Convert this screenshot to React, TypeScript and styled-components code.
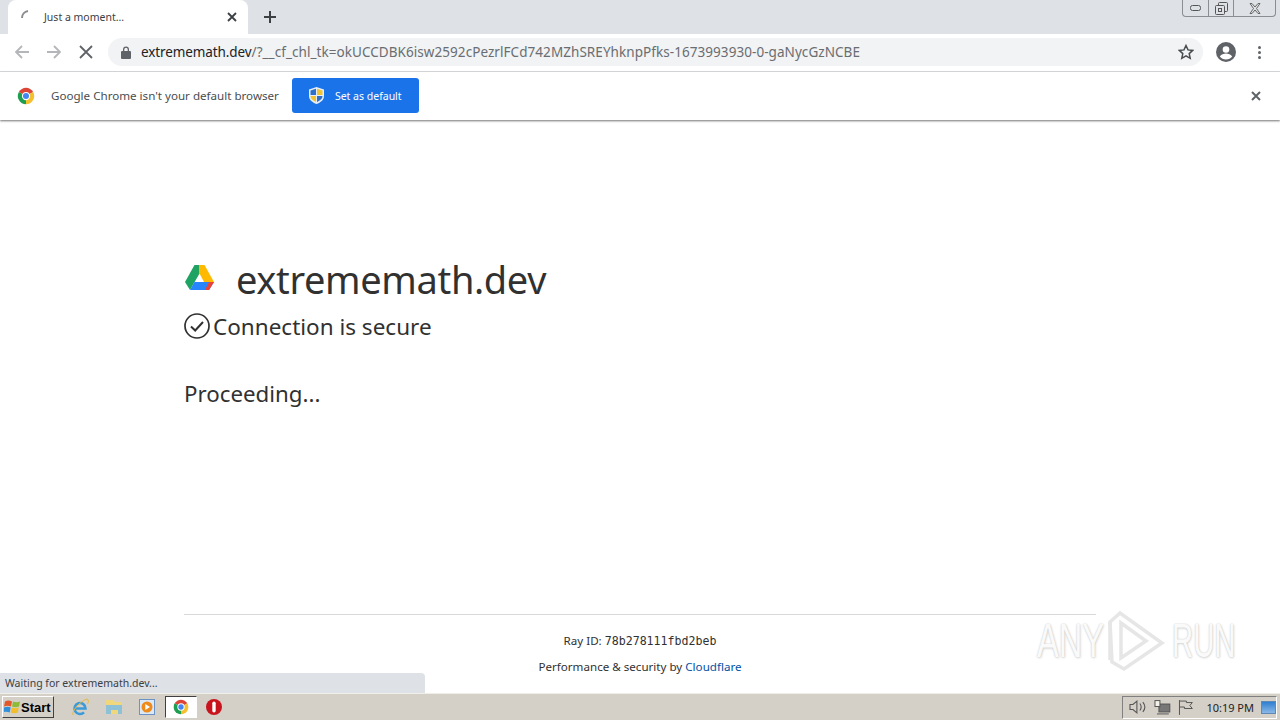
import { FunctionComponent } from 'react';
import styled, { createGlobalStyle } from 'styled-components';

const UI_FONT = '"Noto Sans", "Open Sans", "Liberation Sans", sans-serif';

const GlobalStyle = createGlobalStyle`
	html, body {
		margin: 0;
		padding: 0;
		background: #fff;
		overflow: hidden;
	}
	* {
		box-sizing: border-box;
	}
`;

/** Chrome's round logo, used in the infobar and the taskbar */
const ChromeLogo: FunctionComponent<{ size: number }> = ({ size }) => (
	<svg width={size} height={size} viewBox="0 0 48 48">
		<path d="M24 24 5 13A22 22 0 0 1 43 13z" fill="#db4437" />
		<path d="M24 24 43 13A22 22 0 0 1 24 46z" fill="#f5c02e" />
		<path d="M24 24V46A22 22 0 0 1 5 13z" fill="#1e9e50" />
		<circle cx="24" cy="24" r="11" fill="#fff" />
		<circle cx="24" cy="24" r="8" fill="#4285f4" />
	</svg>
);

const DriveLogo = () => (
	<svg width="31" height="28" viewBox="0 0 31 28">
		<path d="M10.500 1H15.500V9.500L6 26 1 18z" fill="#1ea362" />
		<path d="M15.500 1H20.500L30 18H20L15.500 9.500z" fill="#ffba00" />
		<path d="M10.500 18H30L25 26H6z" fill="#2684fc" />
		<path d="M30 18 25 26H21L25 18z" fill="#ea4335" />
	</svg>
);

const App = () => (
	<Page>
		<GlobalStyle />
		<TabStrip>
			<Tab>
				<Spinner viewBox="0 0 16 16">
					<path d="M2 9a7 7 0 0 1 6-7" />
				</Spinner>
				<TabTitle>Just a moment...</TabTitle>
				<svg width="10" height="10" viewBox="0 0 10 10" stroke="#3c4043" strokeWidth="1.8">
					<path d="M1 1l8 8M9 1l-8 8" />
				</svg>
			</Tab>
			<NewTab viewBox="0 0 12 12">
				<path d="M6 0v12M0 6h12" />
			</NewTab>
			<WindowControls>
				<WindowButton $width={25}>
					<svg width="11" height="6" viewBox="0 0 11 6" fill="none" stroke="#555" strokeWidth="1">
						<rect x="0.5" y="0.5" width="10" height="5" rx="2" />
					</svg>
				</WindowButton>
				<WindowButton $width={25}>
					<svg width="13" height="13" viewBox="0 0 13 13" fill="none" stroke="#555" strokeWidth="1">
						<rect x="3.5" y="0.5" width="9" height="9" rx="1" />
						<rect x="0.5" y="3.5" width="9" height="9" rx="1" fill="#dee1e6" />
						<rect x="3.5" y="6.5" width="3" height="3" />
					</svg>
				</WindowButton>
				<WindowButton $width={42}>
					<svg width="12" height="11" viewBox="0 0 12 11" fill="none" stroke="#666" strokeWidth="1">
						<path d="M1 .5h2L6 4l3-3.5h2L7.5 5.5 11 10.500H9L6 7l-3 3.500H1L4.500 5.500z" />
					</svg>
				</WindowButton>
			</WindowControls>
		</TabStrip>

		<Toolbar>
			<NavIcon viewBox="0 0 16 16" $color="#b4b6b9">
				<path d="M15 8H2M8 2 2 8l6 6" />
			</NavIcon>
			<NavIcon viewBox="0 0 16 16" $color="#b4b6b9">
				<path d="M1 8h13M8 2l6 6-6 6" />
			</NavIcon>
			<NavIcon viewBox="0 0 16 16" $color="#5f6368">
				<path d="M2 2l12 12M14 2 2 14" />
			</NavIcon>
			<Omnibox>
				<svg width="10" height="13" viewBox="0 0 10 13">
					<path d="M2 5V3.500a3 3 0 0 1 6 0V5h1a1 1 0 0 1 1 1v6a1 1 0 0 1-1 1H1a1 1 0 0 1-1-1V6a1 1 0 0 1 1-1zm1.300 0h3.400V3.500a1.700 1.700 0 0 0-3.400 0z" fill="#5f6368" />
				</svg>
				<Url>
					<UrlHost>extrememath.dev</UrlHost>/?__cf_chl_tk=okUCCDBK6isw2592cPezrlFCd742MZhSREYhknpPfks-1673993930-0-gaNycGzNCBE
				</Url>
				<StarIcon viewBox="0 0 16 16">
					<path d="M8 1.500l2 4.400 4.700.5-3.500 3.200 1 4.700L8 11.900l-4.200 2.400 1-4.700L1.300 6.400 6 5.900z" />
				</StarIcon>
			</Omnibox>
			<svg width="20" height="20" viewBox="0 0 20 20">
				<circle cx="10" cy="10" r="10" fill="#5f6368" />
				<circle cx="10" cy="7.500" r="3.300" fill="#fff" />
				<path d="M3.800 14.500c1.500-2.300 4-3 6.200-3s4.700.7 6.200 3a7.800 7.800 0 0 1-12.400 0z" fill="#fff" />
			</svg>
			<MenuDots>
				<i />
				<i />
				<i />
			</MenuDots>
		</Toolbar>

		<InfoBar>
			<ChromeLogo size={18} />
			<InfoText>Google Chrome isn't your default browser</InfoText>
			<DefaultButton>
				<svg width="15" height="17" viewBox="0 0 15 17">
					<path d="M7.500 0 15 2.500V9c0 4-3.500 6.500-7.500 8C3.500 15.500 0 13 0 9V2.500z" fill="#e8eef7" />
					<path d="M7 1.700V8H1.500V3.500z" fill="#2f6fc9" />
					<path d="M8 1.700l5.500 1.800V8H8z" fill="#f2c230" />
					<path d="M8 9h5.500c0 2.800-2.700 4.600-5.500 5.900z" fill="#2f6fc9" />
					<path d="M7 9v5.900C4.200 13.600 1.500 11.800 1.500 9z" fill="#f2c230" />
				</svg>
				Set as default
			</DefaultButton>
			<InfoClose viewBox="0 0 10 10">
				<path d="M1 1l8 8M9 1l-8 8" />
			</InfoClose>
		</InfoBar>

		<Content>
			<Main>
				<SiteTitle>
					<DriveLogo />
					<SiteName>extrememath.dev</SiteName>
				</SiteTitle>
				<SecureRow>
					<svg width="26" height="26" viewBox="0 0 26 26" fill="none" stroke="#313131" strokeWidth="1.700">
						<circle cx="13" cy="13" r="12" />
						<path d="M7 13.500l4.200 4L19 9" strokeWidth="2" />
					</svg>
					Connection is secure
				</SecureRow>
				<Proceeding>Proceeding...</Proceeding>
			</Main>
			<Footer>
				<RayLine>
					Ray ID: <code>78b278111fbd2beb</code>
				</RayLine>
				<PerfLine>
					Performance &amp; security by <a href="#cloudflare">Cloudflare</a>
				</PerfLine>
			</Footer>
			<StatusBubble>Waiting for extrememath.dev...</StatusBubble>
			<Watermark>
				<WatermarkWord $scale={0.68}>ANY</WatermarkWord>
				<svg width="58" height="62" viewBox="0 0 58 62" fill="none" stroke="#e6e6e6" strokeWidth="3.500">
					<path d="M3 12 13 3 55 33 17 59 5 52z" />
					<path d="M14 13v35l25-17z" />
					<path d="M3 12v38" />
				</svg>
				<WatermarkWord $scale={0.61}>RUN</WatermarkWord>
			</Watermark>
		</Content>

		<Taskbar>
			<StartButton>
				<svg width="17" height="16" viewBox="0 0 17 16">
					<path d="M1 2.500c2.500-1.500 4.500-1 7 0L7 7.500c-2.500-1-4.500-1-7 0z" fill="#e2582b" />
					<path d="M9 2.500c2.500 1 4.500 1 7 0l-1 5c-2.500 1-4.500 1-7 0z" fill="#8dbb38" />
					<path d="M0 8.500c2.500-1 4.500-1 6.700 0l-1 5c-2.500-1-4.500-1-7 0z" fill="#2f8fd8" />
					<path d="M7.800 8.500c2.500 1 4.500 1 7 0l-1 5c-2.500 1-4.500 1-7 0z" fill="#f3bd2c" />
				</svg>
				Start
			</StartButton>
			<QuickLaunch>
				<TaskSlot>
					<svg width="18" height="18" viewBox="0 0 18 18" fill="none">
						<path d="M4 10.500h10.500a5.500 5.500 0 1 0-1.500 3.800" stroke="#3d9ad8" strokeWidth="2.600" />
						<path d="M2 17C0 14 9 3 16 1c2 .5 1.500 3.500.5 5" stroke="#e8b93a" strokeWidth="1" />
					</svg>
				</TaskSlot>
				<TaskSlot>
					<svg width="18" height="16" viewBox="0 0 18 16">
						<path d="M1 1h7l2 2h7v12H1z" fill="#f1d77b" />
						<path d="M1 6h16v9h-4v-4H6v4H1z" fill="#8fc1d6" />
					</svg>
				</TaskSlot>
				<TaskSlot>
					<svg width="16" height="16" viewBox="0 0 16 16">
						<rect x="0.500" y="0.500" width="15" height="15" fill="#dbe8f5" stroke="#6c93c4" />
						<circle cx="8" cy="8" r="5.500" fill="#ef8a1d" />
						<path d="M6.300 5v6L11 8z" fill="#fff" />
					</svg>
				</TaskSlot>
				<ActiveTask>
					<ChromeLogo size={16} />
				</ActiveTask>
				<TaskSlot>
					<svg width="16" height="16" viewBox="0 0 16 16">
						<circle cx="8" cy="8" r="8" fill="#c8141c" />
						<rect x="6.300" y="2.500" width="3.400" height="11" rx="1.700" fill="#fff" />
					</svg>
				</TaskSlot>
			</QuickLaunch>
			<Tray>
				<svg width="18" height="16" viewBox="0 0 18 16" fill="none" stroke="#555" strokeWidth="1.100">
					<path d="M1 5.500h3L8 2v12L4 10.500H1zM11 4.500c1.500 2 1.500 5 0 7M14 3c2.500 3 2.500 7 0 10" />
				</svg>
				<svg width="17" height="15" viewBox="0 0 17 15">
					<rect x="5" y="4" width="11" height="8" fill="#777" stroke="#555" />
					<rect x="1" y="0.500" width="5" height="6" fill="#f4f1e8" stroke="#555" />
					<path d="M3 14h12" stroke="#555" />
				</svg>
				<svg width="16" height="15" viewBox="0 0 16 15" fill="none" stroke="#555">
					<path d="M1.500 0v15M1.500 1h7v1.500h6l-2.500 3 2.500 3h-8V7H1.500" />
				</svg>
				<Clock>10:19 PM</Clock>
				<ShowDesktop />
			</Tray>
		</Taskbar>
	</Page>
);

const Page = styled.div`
	display: flex;
	flex-direction: column;
	width: 1280px;
	height: 720px;
	overflow: hidden;
	font-family: ${UI_FONT};
	color: #313131;
`;

const TabStrip = styled.div`
	display: flex;
	align-items: flex-end;
	flex: none;
	height: 34px;
	padding-left: 8px;
	background: #dee1e6;
`;

const Tab = styled.div`
	display: flex;
	align-items: center;
	width: 240px;
	height: 34px;
	padding: 0 11px 0 12px;
	background: #fff;
	border-radius: 8px 8px 0 0;
`;

const Spinner = styled.svg`
	flex: none;
	width: 16px;
	height: 16px;
	fill: none;
	stroke: #8b8d90;
	stroke-width: 2;
`;

const TabTitle = styled.span`
	flex: 1;
	margin-left: 8px;
	font-size: 10.500px;
	color: #3c4043;
`;

const NewTab = styled.svg`
	flex: none;
	align-self: center;
	width: 12px;
	height: 12px;
	margin-left: 16px;
	stroke: #3c4043;
	stroke-width: 2;
`;

const WindowControls = styled.div`
	display: flex;
	align-self: flex-start;
	margin: 0 4px 0 auto;
	height: 17px;
	border: 1px solid #8a8d92;
	border-top: none;
	border-radius: 0 0 4px 4px;
`;

const WindowButton = styled.div<{ $width: number }>`
	display: flex;
	align-items: center;
	justify-content: center;
	width: ${({ $width }) => $width}px;
	& + & {
		border-left: 1px solid #8a8d92;
	}
`;

const Toolbar = styled.div`
	display: flex;
	align-items: center;
	flex: none;
	height: 38px;
	padding: 0 19px 1px 14px;
	background: #fff;
	border-bottom: 1px solid #dadce0;
`;

const NavIcon = styled.svg<{ $color: string }>`
	flex: none;
	width: 16px;
	height: 16px;
	margin-right: 16px;
	fill: none;
	stroke: ${({ $color }) => $color};
	stroke-width: 1.800;
`;

const Omnibox = styled.div`
	display: flex;
	align-items: center;
	flex: 1;
	height: 28px;
	margin: 0 13px 0 -2px;
	padding: 0 9px 0 13px;
	background: #f1f3f4;
	border-radius: 14px;
`;

const Url = styled.span`
	flex: 1;
	margin-left: 10px;
	font-size: 13.500px;
	white-space: nowrap;
	color: #6a6d71;
	letter-spacing: 0.06px;
`;

const UrlHost = styled.span`
	color: #202124;
	letter-spacing: -0.1px;
`;

const StarIcon = styled.svg`
	width: 16px;
	height: 16px;
	fill: none;
	stroke: #4a4d50;
	stroke-width: 1.500;
`;

const MenuDots = styled.div`
	display: flex;
	flex-direction: column;
	gap: 2px;
	margin-left: 22px;
	i {
		width: 3px;
		height: 3px;
		background: #5f6368;
		border-radius: 50%;
	}
`;

const InfoBar = styled.div`
	position: relative;
	z-index: 1;
	display: flex;
	align-items: center;
	flex: none;
	height: 48px;
	padding: 0 17px 1px 17px;
	background: #fff;
	box-shadow: 0 1px 2px rgba(0, 0, 0, 0.55);
`;

const InfoText = styled.span`
	margin-left: 16px;
	font-size: 11.600px;
	color: #4a4d50;
`;

const DefaultButton = styled.div`
	display: flex;
	align-items: center;
	gap: 11px;
	width: 127px;
	height: 35px;
	margin-left: 13px;
	padding-left: 17px;
	background: #1a73e8;
	border-radius: 3px;
	color: #fff;
	font-size: 10.500px;
`;

const InfoClose = styled.svg`
	width: 10px;
	height: 10px;
	margin-left: auto;
	margin-right: 2px;
	stroke: #5f6368;
	stroke-width: 2;
`;

const Content = styled.div`
	position: relative;
	display: flex;
	flex-direction: column;
	flex: 1;
	min-height: 0;
	padding: 0 184px;
	background: #fff;
`;

const Main = styled.div`
	flex: 1;
	padding-top: 134px;
`;

const SiteTitle = styled.div`
	display: flex;
	align-items: center;
	height: 50px;
	svg {
		margin-top: -3px;
		flex: none;
	}
`;

const SiteName = styled.h1`
	margin: 0 0 0 21px;
	font-size: 38px;
	font-weight: 400;
	line-height: 48px;
	color: #313131;
	letter-spacing: -0.35px;
`;

const SecureRow = styled.div`
	display: flex;
	align-items: center;
	gap: 3px;
	margin-top: 4px;
	height: 36px;
	font-size: 22.500px;
`;

const Proceeding = styled.p`
	margin: 34px 0 0;
	font-size: 22.300px;
	line-height: 32px;
`;

const Footer = styled.div`
	flex: none;
	height: 79px;
	border-top: 1px solid #d9d9d9;
	padding-top: 17px;
	text-align: center;
	font-size: 11.600px;
	color: #313131;
	a {
		color: #0051a4;
		text-decoration: none;
	}
`;

const RayLine = styled.div`
	line-height: 18px;
	code {
		font-family: "DejaVu Sans Mono", "Liberation Mono", monospace;
		font-size: 11.600px;
	}
`;

const PerfLine = styled.div`
	margin-top: 8px;
	line-height: 18px;
`;

const StatusBubble = styled.div`
	position: absolute;
	left: 0;
	bottom: 0;
	width: 425px;
	height: 20px;
	padding: 3px 0 0 5px;
	background: #dee1e6;
	border-radius: 0 4px 0 0;
	font-size: 10.500px;
	color: #3c4043;
`;

const Watermark = styled.div`
	position: absolute;
	left: 1037px;
	bottom: 21px;
	display: flex;
	align-items: center;
	gap: 7px;
`;

const WatermarkWord = styled.span<{ $scale: number }>`
	display: inline-block;
	width: 63px;
	font-family: "Liberation Sans", sans-serif;
	font-size: 48px;
	line-height: 62px;
	white-space: nowrap;
	color: #fafafa;
	text-shadow: 0 0 2px #c8c8c8, 1px 1px 3px #d8d8d8;
	transform: scaleX(${({ $scale }) => $scale});
	transform-origin: left center;
`;

const Taskbar = styled.div`
	display: flex;
	align-items: center;
	flex: none;
	height: 27px;
	padding-left: 2px;
	background: #d4d0c8;
	border-top: 1px solid #f0eee8;
`;

const StartButton = styled.div`
	display: flex;
	align-items: center;
	gap: 0;
	width: 52px;
	height: 22px;
	padding-left: 1px;
	background: #d4d0c8;
	border: 1px solid;
	border-color: #fff #404040 #404040 #fff;
	font-family: "Liberation Sans", sans-serif;
	font-size: 13px;
	font-weight: 700;
	color: #000;
`;

const QuickLaunch = styled.div`
	display: flex;
	align-items: center;
	margin-left: 10px;
	gap: 1.500px;
`;

const TaskSlot = styled.div`
	display: flex;
	align-items: center;
	justify-content: center;
	width: 32px;
	height: 22px;
`;

const ActiveTask = styled(TaskSlot)`
	background: #fff;
	border: 1px solid;
	border-color: #404040 #fff #fff #404040;
`;

const Tray = styled.div`
	display: flex;
	align-items: center;
	gap: 7px;
	width: 155px;
	height: 23px;
	margin-left: auto;
	margin-right: 3px;
	padding-left: 6px;
	border: 1px solid;
	border-color: #808080 #fff #fff #808080;
`;

const Clock = styled.span`
	margin-left: 6px;
	font-size: 11px;
	white-space: nowrap;
	color: #222;
`;

const ShowDesktop = styled.div`
	flex: none;
	width: 15px;
	height: 13px;
	margin-left: auto;
	background: linear-gradient(#2f7fd0, #8ab8e6);
	border: 1px solid #5f88b5;
`;

export default App;
